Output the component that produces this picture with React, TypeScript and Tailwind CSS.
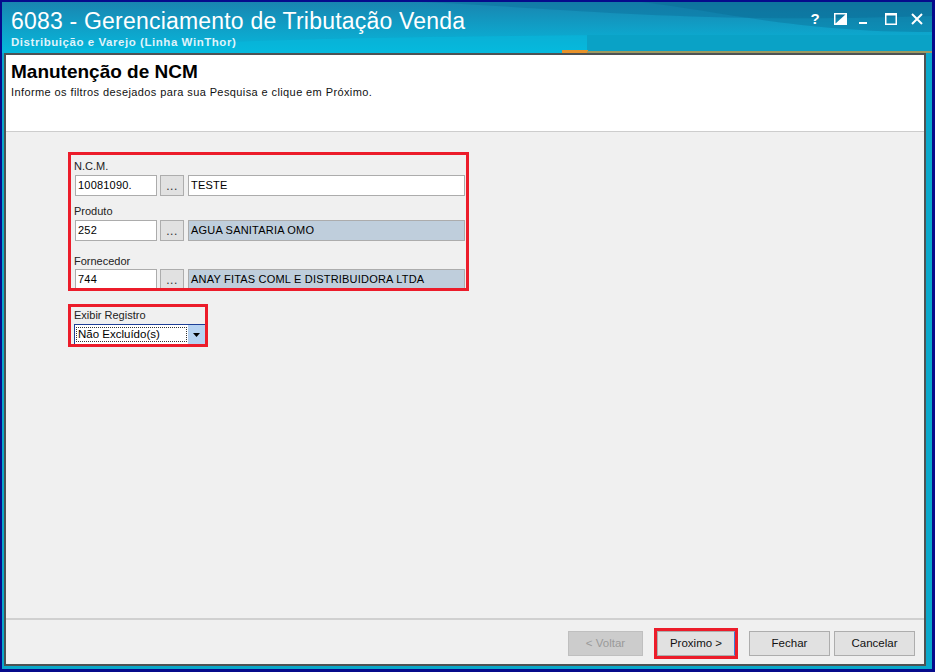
import React from "react";

const FONT = "font-['Liberation_Sans',Arial,sans-serif]";

function TitleBar() {
  return (
    <div className="relative h-[51px] overflow-hidden">
      {/* background artwork of the window frame */}
      <svg className="absolute inset-0" width="930" height="51" viewBox="0 0 930 51">
        <defs>
          <linearGradient id="tb" x1="0" y1="0" x2="0" y2="1">
            <stop offset="0" stopColor="#1985b0" />
            <stop offset="0.55" stopColor="#0fa2c9" />
            <stop offset="1" stopColor="#05b8dc" />
          </linearGradient>
        </defs>
        <rect width="930" height="51" fill="url(#tb)" />
        <path d="M0 51 C 180 40, 380 30, 930 34 L930 51 Z" fill="#06bde0" opacity="0.45" />
        <path d="M420 0 C 560 6, 690 22, 930 14 L930 0 Z" fill="#0a6f9c" opacity="0.45" />
        <path d="M640 0 C 720 10, 800 30, 930 30 L930 0 Z" fill="#0a6690" opacity="0.35" />
        <rect x="585" y="33" width="345" height="17" fill="#0aa2c6" />
        <rect x="560" y="48" width="26" height="3" fill="#e8922a" />
        <rect x="585" y="49" width="345" height="2" fill="#9c9a62" />
      </svg>

      <div className="relative pl-[9px] pt-[8px] text-white">
        <div className="text-[23px] leading-[23px] tracking-[0.2px]">6083 - Gerenciamento de Tributação Venda</div>
        <div className="mt-[3px] text-[11.5px] font-bold leading-[13px] tracking-[0.55px] text-[#dff3fb]">
          Distribuição e Varejo (Linha WinThor)
        </div>
      </div>

      {/* window controls */}
      <div className="absolute right-[9px] top-[9px] flex items-center text-white">
        <span className="w-[14px] text-center text-[15px] font-bold leading-[16px]">?</span>
        <svg className="ml-[12px]" width="13" height="12" viewBox="0 0 13 12">
          <rect x="0.75" y="0.75" width="11.5" height="10.5" fill="none" stroke="#fff" strokeWidth="1.5" />
          <path d="M1 11 L12 1 L12 11 Z" fill="#fff" />
        </svg>
        <svg className="ml-[12px]" width="9" height="12" viewBox="0 0 9 12">
          <rect x="0" y="9" width="8" height="2" fill="#fff" />
        </svg>
        <svg className="ml-[17px]" width="12" height="12" viewBox="0 0 12 12">
          <rect x="0.75" y="0.75" width="10.5" height="10.5" fill="none" stroke="#fff" strokeWidth="1.5" />
          <rect x="0" y="0" width="12" height="2.5" fill="#fff" />
        </svg>
        <svg className="ml-[14px]" width="12" height="12" viewBox="0 0 12 12">
          <path d="M1 1 L11 11 M11 1 L1 11" stroke="#fff" strokeWidth="2" />
        </svg>
      </div>
    </div>
  );
}

function Field({
  code,
  desc,
  readOnly,
}: {
  code: string;
  desc: string;
  readOnly?: boolean;
}) {
  return (
    <div className="flex h-[21px] items-stretch">
      <div className="flex w-[82px] items-center border border-[#acacac] bg-white pl-[2px] text-[11px] tracking-[0.2px] text-black">
        {code}
      </div>
      <div className="ml-[3px] flex w-[24px] items-end justify-center border border-[#adadad] bg-[#e1e1e1] pb-[3px] text-[12px] leading-[12px] tracking-[0.5px] text-[#333]">
        ...
      </div>
      <div
        className={`ml-[4px] flex w-[277px] items-center border border-[#acacac] pl-[2px] text-[11px] tracking-[0.2px] text-black ${
          readOnly ? "bg-[#bfcedc]" : "bg-white"
        }`}
      >
        {desc}
      </div>
    </div>
  );
}

function Button({
  children,
  width,
  disabled,
}: {
  children: React.ReactNode;
  width: string;
  disabled?: boolean;
}) {
  return (
    <div
      className={`flex h-[25px] items-center justify-center border text-[11.5px] ${width} ${
        disabled ? "border-[#bfbfbf] bg-[#cccccc] text-[#9a9a9a]" : "border-[#adadad] bg-[#e1e1e1] text-[#111]"
      }`}
    >
      {children}
    </div>
  );
}

export default function App() {
  return (
    <div className={`h-[672px] w-[935px] bg-[#060b8c] pb-[3px] pl-[2px] pr-[3px] pt-[2px] ${FONT}`}>
      <div className="flex h-full flex-col bg-[#0aa8cb]">
        <TitleBar />
        <div className="flex min-h-0 flex-1 flex-col pb-[3px] pl-[2px] pr-[6px]">
          <div className="flex min-h-0 flex-1 flex-col border-2 border-[#4d5254] bg-[#f0f0f0]">
            {/* Header */}
            <div className="h-[77px] border-b border-[#cdcdcd] bg-white pl-[5px] pt-[6px]">
              <div className="text-[19px] font-bold leading-[22px] text-black">Manutenção de NCM</div>
              <div className="mt-[3px] text-[11px] leading-[13px] tracking-[0.4px] text-[#111]">
                Informe os filtros desejados para sua Pesquisa e clique em Próximo.
              </div>
            </div>

            {/* Body */}
            <div className="flex-1 pl-[62px] pt-[20px]">
              <div className="h-[139px] w-[401px] overflow-hidden border-[3px] border-[#ec1c2a] pl-[3px] pt-[3px]">
                <div className="h-[17px] text-[11px] leading-[16px] text-[#222]">N.C.M.</div>
                <div className="pl-[1px]">
                  <Field code="10081090." desc="TESTE" />
                </div>
                <div className="mt-[7px] h-[17px] text-[11px] leading-[16px] text-[#222]">Produto</div>
                <div className="pl-[1px]">
                  <Field code="252" desc="AGUA SANITARIA OMO" readOnly />
                </div>
                <div className="mt-[12px] h-[16px] text-[11px] leading-[16px] text-[#222]">Fornecedor</div>
                <div className="pl-[1px]">
                  <Field code="744" desc="ANAY FITAS COML E DISTRIBUIDORA LTDA" readOnly />
                </div>
              </div>

              <div className="mt-[13px] h-[43px] w-[140px] overflow-hidden border-[3px] border-[#ec1c2a] pl-[3px] pt-[2px]">
                <div className="h-[15px] text-[11px] leading-[13px] text-[#222]">Exibir Registro</div>
                <div className="flex h-[21px] w-[140px] items-stretch border border-[#1e3f97] bg-white pl-[1px]">
                  <div className="my-[2px] flex w-[111px] items-center border border-dotted border-[#333] pl-[1px] text-[11.5px] text-black">
                    Não Excluído(s)
                  </div>
                  <div className="ml-[1px] flex w-[17px] items-center justify-center bg-[#b6d2f2]">
                    <svg width="7" height="4" viewBox="0 0 7 4">
                      <path d="M0 0 L7 0 L3.5 4 Z" fill="#000" />
                    </svg>
                  </div>
                </div>
              </div>
            </div>

            {/* Button bar */}
            <div className="flex h-[46px] items-start justify-end border-t-2 border-[#d0d0d0] pr-[9px] pt-[11px]">
              <Button width="w-[75px]" disabled>
                &lt; Voltar
              </Button>
              <div className="-mt-[3px] ml-[11px] border-[3px] border-[#ec1c2a]">
                <div className="flex h-[25px] w-[78px] items-center justify-center border border-[#adadad] border-r-[#3b7fd8] bg-[#e1e1e1] text-[11.5px] text-[#111]">
                  Proximo &gt;
                </div>
              </div>
              <div className="ml-[11px]">
                <Button width="w-[81px]">Fechar</Button>
              </div>
              <div className="ml-[4px]">
                <Button width="w-[81px]">Cancelar</Button>
              </div>
            </div>
          </div>
        </div>
      </div>
    </div>
  );
}
